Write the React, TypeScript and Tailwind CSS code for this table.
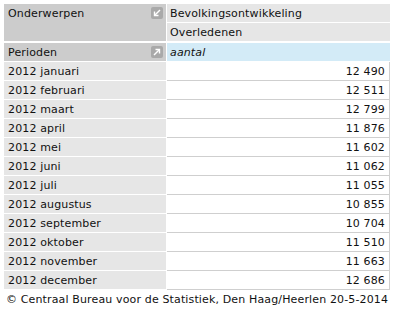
import React from 'react';

const ROWS = [
  ['2012 januari', '12 490'],
  ['2012 februari', '12 511'],
  ['2012 maart', '12 799'],
  ['2012 april', '11 876'],
  ['2012 mei', '11 602'],
  ['2012 juni', '11 062'],
  ['2012 juli', '11 055'],
  ['2012 augustus', '10 855'],
  ['2012 september', '10 704'],
  ['2012 oktober', '11 510'],
  ['2012 november', '11 663'],
  ['2012 december', '12 686'],
];

function PivotIcon({ dir }: { dir: 'in' | 'out' }) {
  return (
    <span className="flex h-[12px] w-[12px] items-center justify-center rounded-[2px] bg-[#a9a9a9]">
      <svg width="8" height="8" viewBox="0 0 8 8" fill="none" stroke="#fff" strokeWidth="1.4">
        {dir === 'in' ? (
          <>
            <path d="M7 1L1.5 6.5" />
            <path d="M1.5 2.5V6.5H5.5" fill="none" />
          </>
        ) : (
          <>
            <path d="M1 7L6.5 1.5" />
            <path d="M2.5 1.5H6.5V5.5" fill="none" />
          </>
        )}
      </svg>
    </span>
  );
}

export default function App() {
  return (
    <div
      className="min-h-[329px] bg-white pl-[4px] pt-[4px] text-[11px] leading-[20px] tracking-[0.14px] text-[#111]"
      style={{ fontFamily: '"DejaVu Sans", Verdana, sans-serif' }}
    >
      <div className="w-[386px]">
        {/* header: onderwerpen */}
        <div className="flex gap-[1px]">
          <div className="flex h-[37px] w-[162px] items-start justify-between bg-[#cccccc] pl-[4px] pr-[3px]">
            <span>Onderwerpen</span>
            <span className="pt-[3px]">
              <PivotIcon dir="in" />
            </span>
          </div>
          <div className="flex w-[223px] flex-col gap-[1px]">
            <div className="h-[18px] bg-[#e6e6e6] pl-[3px]">Bevolkingsontwikkeling</div>
            <div className="h-[18px] bg-[#e6e6e6] pl-[3px]">Overledenen</div>
          </div>
        </div>

        {/* header: perioden */}
        <div className="mt-[2px] flex gap-[1px]">
          <div className="flex h-[18px] w-[162px] items-center justify-between bg-[#cccccc] pl-[4px] pr-[3px]">
            <span className="pt-[2px]">Perioden</span>
            <PivotIcon dir="out" />
          </div>
          <div className="h-[18px] w-[223px] bg-[#d3ebf7] pl-[3px] italic">aantal</div>
        </div>

        {/* data */}
        <div className="mt-[1px] flex flex-col">
          {ROWS.map(([label, value]) => (
            <div key={label} className="flex gap-[1px]">
              <div className="h-[19px] w-[162px] border-b border-white bg-[#e6e6e6] pl-[4px]">{label}</div>
              <div className="h-[19px] w-[223px] border-b border-r border-[#cfcfcf] pr-[4px] text-right">
                {value}
              </div>
            </div>
          ))}
        </div>
      </div>

      <div className="pl-[2px]">© Centraal Bureau voor de Statistiek, Den Haag/Heerlen 20-5-2014</div>
    </div>
  );
}
